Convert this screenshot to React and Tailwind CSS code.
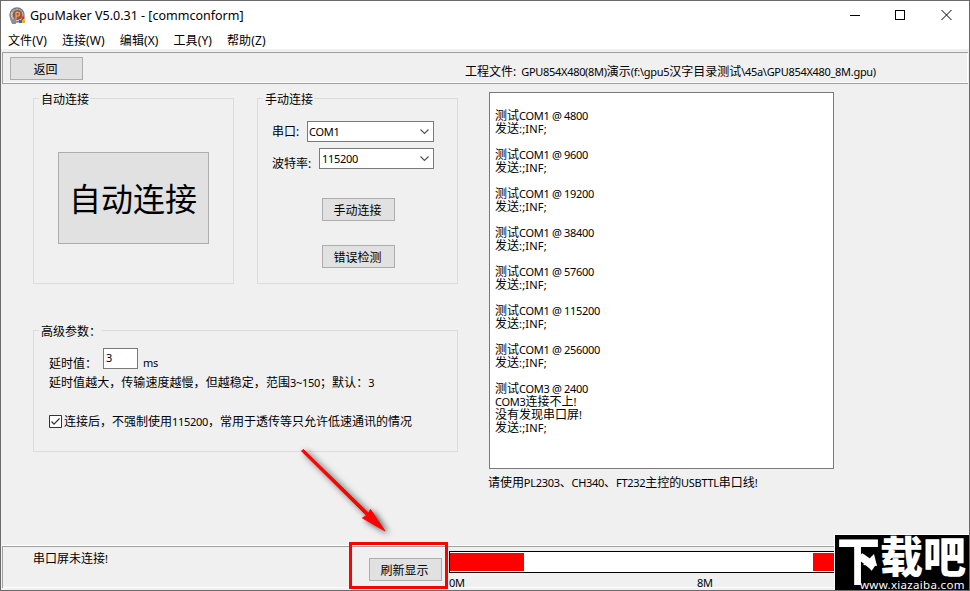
import React from "react";

const LOG = [
  "", "测试COM1 @ 4800", "发送:;INF;",
  "", "测试COM1 @ 9600", "发送:;INF;",
  "", "测试COM1 @ 19200", "发送:;INF;",
  "", "测试COM1 @ 38400", "发送:;INF;",
  "", "测试COM1 @ 57600", "发送:;INF;",
  "", "测试COM1 @ 115200", "发送:;INF;",
  "", "测试COM1 @ 256000", "发送:;INF;",
  "", "测试COM3 @ 2400", "COM3连接不上!", "没有发现串口屏!", "发送:;INF;",
];

// Latin runs are set one step smaller than the Chinese runs beside them;
// runs that open with punctuation are spaced a little wider.
function T({ children }) {
  return children.split(/([\x20-\x7e]+)/).map((run, i) =>
    i % 2 ? (
      <span key={i} className={run.startsWith(":") ? "text-[11px] tracking-[0.2px]" : "text-[11px] tracking-[-0.3px]"}>{run}</span>
    ) : run
  );
}

function Button({ children, className = "" }) {
  return (
    <button className={`flex h-[23px] w-[73px] items-center justify-center border border-[#adadad] bg-[#e1e1e1] pt-[2px] pr-[2px] ${className}`}>
      {children}
    </button>
  );
}

function Group({ title, className, children }) {
  return (
    <fieldset className={`min-w-0 border border-[#dcdcdc] ${className}`}>
      <legend className="ml-[5px] h-[14px] pr-px pl-[2px] leading-[17px]"><T>{title}</T></legend>
      {children}
    </fieldset>
  );
}

function Select({ value, className }) {
  return (
    <div className={`flex h-[21px] items-center justify-between border border-[#7a7a7a] bg-white pr-[3px] pb-px ${className}`}>
      <span><T>{value}</T></span>
      <svg width="11" height="8" viewBox="0 0 11 8" fill="none" stroke="#555" strokeWidth="1.2">
        <path d="M1.5 2.500 5.5 6.500 9.5 2.500" />
      </svg>
    </div>
  );
}

function AppIcon() {
  return (
    <svg width="17" height="17" viewBox="0 0 17 17">
      <circle cx="8" cy="8" r="7.7" fill="#777c84" />
      <circle cx="8" cy="8" r="6.3" fill="#c3c7cd" />
      <path d="M3 5 8 1.5 13 5" fill="none" stroke="#8d9299" />
      <circle cx="8.5" cy="8" r="4.9" fill="#a3532a" />
      <path d="M7 12V6.2C7 4.8 10.6 4.8 10.6 7S8.5 9.2 7 9" fill="none" stroke="#dba982" strokeWidth="1.3" />
      <path d="M1 12h6v5H3z" fill="#8a9099" />
      <path d="M10 13h3v3h-3z" fill="#3c62c4" />
      <path d="M12.500 9.500h3v3h-3z" fill="#d33a2a" />
      <path d="M13 13h3v3h-3z" fill="#e6b422" />
    </svg>
  );
}

export default function App() {
  return (
    <div className="relative flex h-[591px] w-[970px] flex-col overflow-hidden border border-[#6b6b6b] bg-[#f0f0f0] font-['Noto_Sans','Noto_Sans_CJK_SC',sans-serif] text-[12px] leading-[13px] text-black">
      <header className="flex h-[29px] shrink-0 items-center bg-white pl-[8px]">
        <AppIcon />
        <span className="ml-[4px] text-[12.500px]">GpuMaker V5.0.31 - [commconform]</span>
        <svg className="mr-[17px] mb-px ml-auto" width="102" height="12" viewBox="0 0 102 12" fill="none" stroke="#000" shapeRendering="crispEdges">
          <path d="M0 6.500h10" />
          <path d="M45.500 1.500h9v9h-9z" />
          <path d="M91.500 1 101.500 11M101.500 1 91.500 11" shapeRendering="auto" />
        </svg>
      </header>
      <nav className="flex h-[19px] shrink-0 items-center gap-[15px] bg-white pt-[2px] pl-[7px] tracking-[0.1px]">
        {["文件(V)", "连接(W)", "编辑(X)", "工具(Y)", "帮助(Z)"].map((m) => <span key={m} className="whitespace-nowrap">{m}</span>)}
      </nav>

      <div className="mt-[3px] mr-px ml-px flex h-[32px] shrink-0 border-y border-l border-[#a0a0a0] shadow-[inset_0_-1px_#fff,inset_-1px_0_#fff]">
        <Button className="mt-[4px] ml-[7px]">返回</Button>
        <div className="mt-[12px] ml-[382px] flex whitespace-nowrap">
          <span className="mr-[5px]">工程文件:</span>
          <span><T>{"GPU854X480(8M)演示(f:\\gpu5汉字目录测试\\45a\\GPU854X480_8M.gpu)"}</T></span>
        </div>
      </div>

      <main className="flex h-[462px] shrink-0 pt-[7px] pl-[32px]">
        <div className="flex w-[425px] flex-col">
          <div className="flex justify-between">
            <Group title="自动连接" className="h-[193px] w-[201px]">
              <button className="mt-[47px] ml-[24px] flex h-[92px] w-[151px] items-center justify-center border border-[#adadad] bg-[#e1e1e1] pr-px text-[32px]">
                自动连接
              </button>
            </Group>
            <Group title="手动连接" className="h-[193px] w-[201px]">
              <div className="mt-[16px] flex items-center pl-[14px]">
                <span className="w-[35px]">串口:</span>
                <Select value="COM1" className="w-[127px] pl-px" />
              </div>
              <div className="mt-[6px] flex h-[21px] items-start pl-[14px]">
                <span className="mt-[9px] w-[47px]">波特率:</span>
                <Select value="115200" className="w-[115px] pl-[2px]" />
              </div>
              <Button className="mt-[29px] ml-[64px]">手动连接</Button>
              <Button className="mt-[24px] ml-[64px]">错误检测</Button>
            </Group>
          </div>
          <Group title="高级参数：" className="mt-[39px] h-[129px] w-[425px]">
            <div className="mt-[10px] flex pl-[15px]">
              <span className="mt-[10px] w-[54px]">延时值：</span>
              <div className="mt-px h-[21px] w-[35px] border border-[#7a7a7a] bg-white pt-[2px] pl-[2px]"><T>3</T></div>
              <span className="mt-[9px] ml-[5px]"><T>ms</T></span>
            </div>
            <p className="mt-[6px] pl-[15px] tracking-[0.05px] whitespace-nowrap"><T>延时值越大，传输速度越慢，但越稳定，范围3~150；默认：3</T></p>
            <label className="mt-[26px] flex items-center pl-[15px] whitespace-nowrap">
              <svg className="mr-[2px]" width="13" height="13" viewBox="0 0 13 13">
                <path d="M.5.5h12v12H.5z" fill="#fff" stroke="#333" />
                <path d="M2.500 6.500 5 9.200 10.500 3.500" fill="none" stroke="#333" strokeWidth="1.2" />
              </svg>
              <span><T>连接后，不强制使用115200，常用于透传等只允许低速通讯的情况</T></span>
            </label>
          </Group>
        </div>
        <div className="ml-[31px] w-[345px] pt-[1px]">
          <div className="h-[377px] border border-[#7a7a7a] bg-white pt-[3px] pl-[5px]">
            {LOG.map((l, i) => <div key={i} className="h-[13px] whitespace-pre"><T>{l}</T></div>)}
          </div>
          <p className="mt-[7px] -ml-px tracking-[-0.05px] whitespace-nowrap"><T>请使用PL2303、CH340、FT232主控的USBTTL串口线!</T></p>
        </div>
      </main>

      <footer className="ml-px flex h-[42px] shrink-0 border-t border-l border-[#a0a0a0] shadow-[0_-1px_#fff,inset_0_-1px_#fff]">
        <span className="mt-[5px] ml-[30px] w-[336px]"><T>串口屏未连接!</T></span>
        <Button className="mt-[11px]">刷新显示</Button>
        <div className="ml-[7px] flex-1 pt-[4px]">
          <div className="flex h-[22px] border border-black bg-white py-px">
            <div className="w-[74px] bg-[#f00]" />
            <div className="ml-[289px] w-[60px] bg-[#f00]" />
          </div>
          <div className="mt-[3px] flex"><span className="w-[248px]"><T>0M</T></span><T>8M</T></div>
        </div>
      </footer>

      <div className="absolute top-[541px] left-[348px] h-[47px] w-[99px] border-[3px] border-[#f00]" />
      <svg className="absolute top-[439px] left-[289px]" width="110" height="105" viewBox="290 440 110 105">
        <path d="M303.500 449.500 368.500 513 370.500 509.500 385 531 362.500 518 366.500 515.500 301.500 451Z" fill="#f00" stroke="#f00" strokeLinejoin="round" className="drop-shadow-[3px_2px_3px_rgba(0,0,0,0.7)]" />
      </svg>

      <div className="absolute top-[533px] left-[833px] h-[56px] w-[135px] border-t border-l border-white bg-black text-white">
        <div className="flex h-[43px] pl-[2px] text-[43px] leading-[43px] font-black whitespace-nowrap">
          <span className="origin-top scale-y-[1.18]">下</span>
          <span>载吧</span>
        </div>
        <div className="h-[13px] pl-[25px] text-[11.500px] leading-[13px] tracking-[0.3px] whitespace-nowrap">www.xiazaiba.com</div>
        {/* Download arrowhead at the end of the first character's short stroke */}
        <svg className="absolute top-[19px] left-[28px]" width="14" height="13" viewBox="0 0 14 13" fill="#fff">
          <path d="M11 0 14 12 0 11Z" />
        </svg>
      </div>
    </div>
  );
}
